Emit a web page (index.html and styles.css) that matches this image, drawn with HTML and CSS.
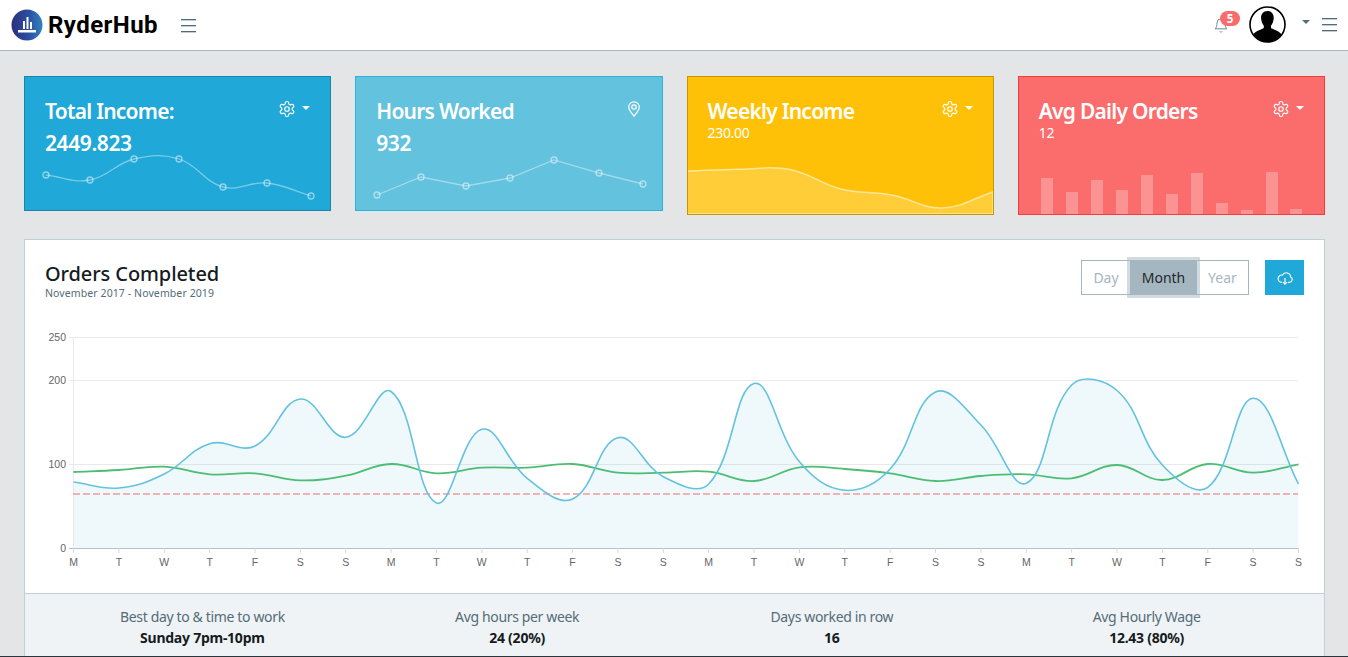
FILE: index.html
```html
<!DOCTYPE html>
<html lang="en">
<head>
<meta charset="utf-8">
<title>RyderHub</title>
<link rel="stylesheet" href="styles.css">
</head>
<body>
<svg class="defs" width="0" height="0" aria-hidden="true">
  <symbol id="gear" viewBox="0 0 24 24"><path d="M12.22 2h-.44a2 2 0 0 0-2 2v.18a2 2 0 0 1-1 1.73l-.43.25a2 2 0 0 1-2 0l-.15-.08a2 2 0 0 0-2.73.73l-.22.38a2 2 0 0 0 .73 2.73l.15.1a2 2 0 0 1 1 1.72v.51a2 2 0 0 1-1 1.74l-.15.09a2 2 0 0 0-.73 2.73l.22.38a2 2 0 0 0 2.73.73l.15-.08a2 2 0 0 1 2 0l.43.25a2 2 0 0 1 1 1.73V20a2 2 0 0 0 2 2h.44a2 2 0 0 0 2-2v-.18a2 2 0 0 1 1-1.73l.43-.25a2 2 0 0 1 2 0l.15.08a2 2 0 0 0 2.73-.73l.22-.39a2 2 0 0 0-.73-2.73l-.15-.08a2 2 0 0 1-1-1.74v-.5a2 2 0 0 1 1-1.74l.15-.09a2 2 0 0 0 .73-2.73l-.22-.38a2 2 0 0 0-2.73-.73l-.15.08a2 2 0 0 1-2 0l-.43-.25a2 2 0 0 1-1-1.73V4a2 2 0 0 0-2-2z"/><circle cx="12" cy="12" r="3"/></symbol>
</svg>

<header class="navbar">
  <a class="brand">
    <svg class="brand-mark" width="32" height="32" viewBox="0 0 32 32">
      <defs><linearGradient id="logoGrad" x1="0" y1="0.5" x2="1" y2="0.5"><stop offset="0" stop-color="#2b2f80"/><stop offset="0.55" stop-color="#2b4f9e"/><stop offset="1" stop-color="#3183c4"/></linearGradient></defs>
      <circle cx="16" cy="16" r="15.5" fill="url(#logoGrad)"/>
      <path d="M12 12h2v8h-2zM15.500 8h2v12h-2zM19 13h2v7h-2zM7 21h18v2.500H7z" fill="#fff"/>
    </svg>
    <span class="brand-name">RyderHub</span>
  </a>
  <button class="burger burger-left" aria-label="Toggle sidebar"><i></i><i></i><i></i></button>
  <div class="nav-right">
    <div class="bell">
      <svg width="16" height="17" viewBox="0 0 24 24" class="bell-icon"><path d="M6 8a6 6 0 0 1 12 0c0 7 3 9 3 9H3s3-2 3-9"/><path d="M10.300 21a1.940 1.940 0 0 0 3.400 0"/></svg>
      <span class="badge">5</span>
    </div>
    <svg class="avatar" width="37" height="37" viewBox="0 0 37 37">
      <defs><clipPath id="avClip"><circle cx="18.500" cy="18.500" r="17.500"/></clipPath></defs>
      <circle cx="18.500" cy="18.500" r="17.500" fill="#fff"/>
      <g clip-path="url(#avClip)"><path d="M18.500 5c4.500 0 6.500 3.500 6.200 7.500-.2 2.500-1 5-2.400 6.800-.6.8-.5 2.700.5 3.300 3 1.600 8.500 3 10 6.400V37H4v-8c1.500-3.400 7-4.800 10-6.400 1-.6 1.100-2.500.5-3.300-1.400-1.800-2.200-4.300-2.400-6.800C11.800 8.500 14 5 18.500 5z" fill="#000"/></g>
      <circle cx="18.500" cy="18.500" r="17.500" fill="none" stroke="#000" stroke-width="1.600"/>
    </svg>
    <span class="caret caret-nav"></span>
    <button class="burger" aria-label="Toggle aside"><i></i><i></i><i></i></button>
  </div>
</header>

<main class="page">
  <section class="stats">
    <article class="stat stat-primary">
      <div class="stat-body">
        <div class="stat-tools"><svg class="gear" width="18" height="18"><use href="#gear"/></svg><span class="caret"></span></div>
        <h3 class="stat-title">Total Income:</h3>
        <div class="stat-value">2449.823</div>
      </div>
      <svg class="spark spark-short" width="305" height="50" viewBox="25 160 305 50">
        <path class="spark-line" data-curve="46,175 90,180 134,159 179,159 223,187 267,183 311,196"/>
        <g class="spark-dots" data-dots="46,175 90,180 134,159 179,159 223,187 267,183 311,196"></g>
      </svg>
    </article>
    <article class="stat stat-info">
      <div class="stat-body">
        <div class="stat-tools">
          <svg class="pin" width="14" height="16" viewBox="0 0 14 16"><path d="M7 15.200C5 12.600 1.700 9.300 1.700 6.100a5.300 5.300 0 0 1 10.600 0c0 3.200-3.300 6.500-5.300 9.100z"/><circle cx="7" cy="6" r="2.200"/></svg>
        </div>
        <h3 class="stat-title">Hours Worked</h3>
        <div class="stat-value">932</div>
      </div>
      <svg class="spark spark-short" width="306" height="50" viewBox="356 160 306 50">
        <polyline class="spark-line" points="377,195 421,177 466,186 510,178 554,160 599,173 643,184"/>
        <g class="spark-dots" data-dots="377,195 421,177 466,186 510,178 554,160 599,173 643,184"></g>
      </svg>
    </article>
    <article class="stat stat-warning">
      <div class="stat-body">
        <div class="stat-tools"><svg class="gear" width="18" height="18"><use href="#gear"/></svg><span class="caret"></span></div>
        <h3 class="stat-title">Weekly Income</h3>
        <div class="stat-sub">230.00</div>
      </div>
      <svg class="spark spark-tall" width="305" height="74" viewBox="688 140 305 74">
        <path class="spark-area" data-curve="687,171 739,169.300 790,169.500 841,189 892,195 942,208 993,192" data-close="214"/>
      </svg>
    </article>
    <article class="stat stat-danger">
      <div class="stat-body">
        <div class="stat-tools"><svg class="gear" width="18" height="18"><use href="#gear"/></svg><span class="caret"></span></div>
        <h3 class="stat-title">Avg Daily Orders</h3>
        <div class="stat-sub">12</div>
      </div>
      <svg class="spark spark-tall" width="305" height="74" viewBox="1019 140 305 74">
        <g class="spark-bars" data-bars="1041,178 1066,192 1091,180 1116,190 1141,175 1166,194 1191,173 1216,203 1241,210 1266,172 1290,209"></g>
      </svg>
    </article>
  </section>

  <section class="panel">
    <div class="panel-body">
      <div class="panel-head">
        <div>
          <h2 class="panel-title">Orders Completed</h2>
          <p class="panel-sub">November 2017 - November 2019</p>
        </div>
        <div class="panel-actions">
          <div class="btn-group">
            <button class="range">Day</button>
            <button class="range range-active">Month</button>
            <button class="range">Year</button>
          </div>
          <button class="download" aria-label="Download">
            <svg width="16" height="16" viewBox="0 0 24 24"><path d="M7.500 18.500H7A5.500 5.500 0 1 1 8.200 7.600 6.500 6.500 0 0 1 20.400 10.500a4.200 4.200 0 0 1-1.400 8h-2.500"/><path d="M12 12v9M8.800 18.200 12 21.400l3.200-3.200"/></svg>
          </button>
        </div>
      </div>
      <svg id="chart" class="chart" width="1299" height="255" viewBox="25 320 1299 255">
        <g class="grid">
          <line x1="69" x2="1298" y1="337.500" y2="337.500"/>
          <line x1="69" x2="1298" y1="380.500" y2="380.500"/>
          <line x1="69" x2="1298" y1="464.500" y2="464.500"/>
          <line x1="73.500" x2="73.500" y1="337" y2="548"/>
        </g>
        <g class="y-labels">
          <text x="66" y="340.500">250</text>
          <text x="66" y="383.500">200</text>
          <text x="66" y="467.500">100</text>
          <text x="66" y="551.500">0</text>
        </g>
        <path class="blue-area" data-series="482 488 474 443.700 446 399 437.300 391.500 503 429.300 478.300 499 437.700 476.700 484 383.500 461.700 490.300 469 392 425 483.300 385 390.500 465 487.300 398.300 484" data-close="548"/>
        <line class="axis-x" x1="69" x2="1298" y1="548.500" y2="548.500"/>
        <line class="target" x1="73" x2="1298" y1="494" y2="494"/>
        <path class="green-line" data-series="472 470 466.700 474.300 473.300 480.300 475.700 464 473.300 467.700 467.700 464 472.700 472.700 471.700 481 467.300 469 473.300 481 476 474.300 478.300 465 480 464 472.700 464.300"/>
        <path class="blue-line" data-series="482 488 474 443.700 446 399 437.300 391.500 503 429.300 478.300 499 437.700 476.700 484 383.500 461.700 490.300 469 392 425 483.300 385 390.500 465 487.300 398.300 484"/>
        <g id="xTicks" class="x-ticks"></g>
        <g id="xLabels" class="x-labels"></g>
      </svg>
    </div>
    <footer class="panel-foot">
      <div class="metric"><div class="metric-label">Best day to &amp; time to work</div><strong class="metric-value">Sunday 7pm-10pm</strong></div>
      <div class="metric"><div class="metric-label">Avg hours per week</div><strong class="metric-value">24 (20%)</strong></div>
      <div class="metric"><div class="metric-label">Days worked in row</div><strong class="metric-value">16</strong></div>
      <div class="metric"><div class="metric-label">Avg Hourly Wage</div><strong class="metric-value">12.43 (80%)</strong></div>
    </footer>
  </section>
</main>
<div class="window-edge"></div>
<script src="script.js"></script>
</body>
</html>
```
FILE: styles.css
```css
* { box-sizing: border-box; }
html, body { height: 100%; overflow: hidden; }
body {
  margin: 0;
  background: #e4e5e6;
  color: #151b1e;
  font-family: "Noto Sans", "Open Sans", sans-serif;
  font-size: 14px;
}
.defs { position: absolute; }
h2, h3, p { margin: 0; }
button { font-family: inherit; cursor: pointer; }

/* navbar */
.navbar {
  height: 51px;
  display: flex;
  align-items: center;
  background: #fff;
  border-bottom: 1px solid #a4b7c1;
  padding: 0 11px 1px 11px;
}
.brand { display: flex; align-items: center; }
.brand-mark { display: block; }
.brand-name {
  margin-left: 5px;
  font-family: "Roboto", sans-serif;
  font-weight: 700;
  font-size: 24px;
  letter-spacing: 0.45px;
  color: #000;
}
.burger {
  width: 15px;
  height: 13px;
  padding: 0;
  border: 0;
  background: none;
  display: flex;
  flex-direction: column;
  justify-content: space-between;
}
.burger i { display: block; height: 1px; width: 100%; background: #536c79; box-shadow: 0 1px 0 rgba(83,108,121,.35); }
.burger-left { margin-left: 23px; margin-top: 2px; }
.nav-right { margin-left: auto; display: flex; align-items: center; }
.bell { position: relative; width: 16px; height: 17px; margin-right: 20px; margin-top: 1px; }
.bell-icon { display: block; fill: none; stroke: #6d8795; stroke-width: 1.500; }
.badge {
  position: absolute;
  left: 7px;
  top: -6px;
  width: 20px;
  height: 15px;
  border-radius: 8px;
  background: #f86c6b;
  color: #fff;
  font-size: 11.500px;
  font-weight: 700;
  line-height: 15px;
  text-align: center;
}
.avatar { display: block; }
.caret {
  display: inline-block;
  width: 0;
  height: 0;
  border-top: 4px solid #fff;
  border-left: 4px solid transparent;
  border-right: 4px solid transparent;
}
.caret-nav { border-top-color: #536c79; margin: 0 12px 0 16px; position: relative; top: -3px; }

/* page */
.page { padding: 25px 23px 0 24px; }
.stats {
  display: grid;
  grid-template-columns: repeat(4, 1fr);
  gap: 24px;
  align-items: start;
  margin-bottom: 24px;
}
.stat { border: 1px solid; color: #fff; overflow: hidden; }
.stat-primary { background: #20a8d8; border-color: #1985ac; }
.stat-info { background: #63c2de; border-color: #2fb2d8; }
.stat-warning { background: #ffc107; border-color: #c69500; }
.stat-danger { background: #fb6c6c; border-color: #f63c3a; }
.stat-body { position: relative; padding: 19px 20px 0; }
.stat-title { font-size: 21px; font-weight: 600; line-height: 30px; letter-spacing: -0.75px; }
.stat-value { font-size: 21px; font-weight: 600; line-height: 34px; letter-spacing: -0.4px; }
.stat-sub { font-size: 14px; line-height: 14px; letter-spacing: -0.3px; }
.stat-tools {
  position: absolute;
  right: 20px;
  top: 23px;
  display: flex;
  align-items: center;
  gap: 6px;
}
.stat-tools .caret { position: relative; top: -1px; }
.gear { fill: none; stroke: #fff; stroke-width: 1.600; display: block; }
.pin { fill: none; stroke: #fff; stroke-width: 1.200; display: block; margin: 1px 1px 0 0; }
.spark { display: block; overflow: visible; }
.spark-line { fill: none; stroke: rgba(255,255,255,.4); stroke-width: 1.300; }
.spark-dots circle { fill: none; stroke: rgba(255,255,255,.5); stroke-width: 1.300; }
.spark-area { fill: rgba(255,255,255,.2); stroke: rgba(255,255,255,.55); stroke-width: 1.500; }
.spark-bars rect { fill: rgba(255,255,255,.27); }

/* panel */
.panel { background: #fff; border: 1px solid #c2cfd6; }
.panel-body { padding: 20px 0 0; }
.panel-head {
  display: flex;
  justify-content: space-between;
  padding: 0 20px;
  height: 60px;
}
.panel-title { font-size: 20px; font-weight: 500; line-height: 26px; letter-spacing: -0.1px; color: #151b1e; padding-top: 1px; }
.panel-sub { font-size: 10.500px; line-height: 13px; color: #536c79; letter-spacing: 0.1px; }
.panel-actions { display: flex; gap: 16px; align-items: flex-start; }
.btn-group { display: flex; }
.range {
  height: 35px;
  padding: 0 10px;
  border: 1px solid #a4b7c1;
  background: #fff;
  color: #a4b7c1;
  font-size: 14px;
  margin-left: -1px;
}
.range:first-child { border-right: 0; margin-left: 0; width: 49px; }
.range:last-child { border-left: 0; margin-left: 0; width: 52px; }
.range-active {
  width: 67px;
  margin-left: 0;
  background: #a4b7c1;
  color: #23282c;
  box-shadow: 0 0 0 3px rgba(164,183,193,.5);
  position: relative;
}
.download {
  width: 39px;
  height: 35px;
  padding: 0;
  border: 0;
  background: #20a8d8;
  display: flex;
  align-items: center;
  justify-content: center;
}
.download svg { fill: none; stroke: #fff; stroke-width: 1.700; }
.chart { display: block; margin-bottom: 18px; }
.grid line { stroke: #e9e9e9; stroke-width: 1; }
.axis-x { stroke: #b4c0c7; stroke-width: 1; }
.y-labels text { font: 10.500px "Liberation Sans", sans-serif; fill: #666; text-anchor: end; }
.x-labels text { font: 10.500px "Liberation Sans", sans-serif; fill: #666; text-anchor: middle; }
.x-ticks line { stroke: #d8d8d8; stroke-width: 1; }
.blue-area { fill: rgba(99,194,222,.1); stroke: none; }
.blue-line { fill: none; stroke: #63c2de; stroke-width: 1.600; }
.green-line { fill: none; stroke: #4dbd74; stroke-width: 1.800; }
.target { stroke: #ee9c9c; stroke-width: 1.300; stroke-dasharray: 7 3; }

.panel-foot {
  display: grid;
  grid-template-columns: repeat(4, 1fr);
  background: #f0f3f5;
  border-top: 1px solid #c2cfd6;
  padding: 12px 20px 20px;
  text-align: center;
}
.metric-label { color: #536c79; font-size: 14px; line-height: 21px; letter-spacing: -0.35px; }
.metric-value { display: block; font-size: 14px; font-weight: 700; line-height: 21px; letter-spacing: -0.25px; color: #151b1e; }

.window-edge { position: fixed; left: 0; right: 0; bottom: 0; height: 1px; background: #29363d; }
```
FILE: script.js
```js
// Draws the chart curves with the same spline as the original charts (tension 0.4).
var TENSION = 0.4;
var X0 = 73.5;
var STEP = 1225 / 27;

function parsePoints(text) {
  return text.trim().split(/\s+/).map(function (pair) {
    return pair.split(",").map(Number);
  });
}
function dist(a, b) {
  return Math.sqrt(Math.pow(a[0] - b[0], 2) + Math.pow(a[1] - b[1], 2));
}
function smoothPath(pts) {
  var before = [], after = [];
  pts.forEach(function (cur, i) {
    var prev = pts[i - 1] || cur;
    var next = pts[i + 1] || cur;
    var d01 = dist(prev, cur), d12 = dist(cur, next);
    var sum = d01 + d12 || 1;
    var fa = TENSION * d01 / sum, fb = TENSION * d12 / sum;
    before.push([cur[0] - fa * (next[0] - prev[0]), cur[1] - fa * (next[1] - prev[1])]);
    after.push([cur[0] + fb * (next[0] - prev[0]), cur[1] + fb * (next[1] - prev[1])]);
  });
  var d = "M" + pts[0][0] + " " + pts[0][1];
  for (var i = 1; i < pts.length; i++) {
    d += "C" + after[i - 1][0] + " " + after[i - 1][1] + " " + before[i][0] + " " + before[i][1] + " " + pts[i][0] + " " + pts[i][1];
  }
  return d;
}
function applyPath(path, pts) {
  var d = smoothPath(pts);
  if (path.dataset.close) {
    var base = path.dataset.close;
    d += "L" + pts[pts.length - 1][0] + " " + base + "L" + pts[0][0] + " " + base + "Z";
  }
  path.setAttribute("d", d);
}
var NS = "http://www.w3.org/2000/svg";
function el(parent, name, attrs, text) {
  var node = document.createElementNS(NS, name);
  Object.keys(attrs).forEach(function (k) { node.setAttribute(k, attrs[k]); });
  if (text) node.textContent = text;
  parent.appendChild(node);
}
document.querySelectorAll("[data-curve]").forEach(function (path) {
  applyPath(path, parsePoints(path.dataset.curve));
});
document.querySelectorAll("[data-series]").forEach(function (path) {
  var pts = path.dataset.series.trim().split(/\s+/).map(function (y, i) {
    return [X0 + i * STEP, Number(y)];
  });
  applyPath(path, pts);
});
document.querySelectorAll("[data-dots]").forEach(function (g) {
  parsePoints(g.dataset.dots).forEach(function (p) {
    el(g, "circle", { cx: p[0], cy: p[1], r: 3 });
  });
});
document.querySelectorAll("[data-bars]").forEach(function (g) {
  parsePoints(g.dataset.bars).forEach(function (p) {
    el(g, "rect", { x: p[0], y: p[1], width: 12, height: 214 - p[1] });
  });
});
var days = "MTWTFSS";
var ticks = document.getElementById("xTicks");
var labels = document.getElementById("xLabels");
for (var i = 0; i < 28; i++) {
  var x = X0 + i * STEP;
  el(ticks, "line", { x1: x, x2: x, y1: 548, y2: 553 });
  el(labels, "text", { x: x, y: 565.5 }, days[i % 7]);
}
```
